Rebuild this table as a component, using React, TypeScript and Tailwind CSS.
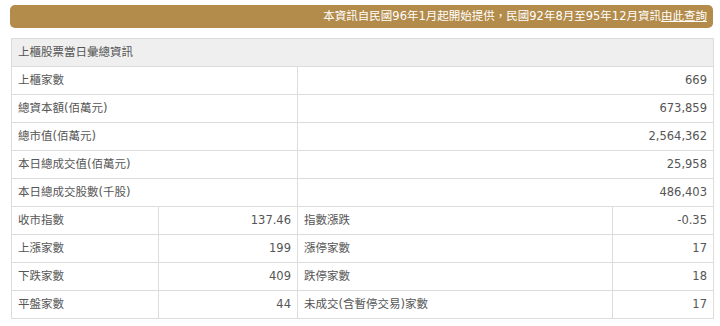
const font = { fontFamily: '"DejaVu Sans", "Noto Sans CJK TC", sans-serif' }

const summary = [
  { label: '上櫃家數', value: '669' },
  { label: '總資本額(佰萬元)', value: '673,859' },
  { label: '總市值(佰萬元)', value: '2,564,362' },
  { label: '本日總成交值(佰萬元)', value: '25,958' },
  { label: '本日總成交股數(千股)', value: '486,403' },
]

const pairs = [
  ['收市指數', '137.46', '指數漲跌', '-0.35'],
  ['上漲家數', '199', '漲停家數', '17'],
  ['下跌家數', '409', '跌停家數', '18'],
  ['平盤家數', '44', '未成交(含暫停交易)家數', '17'],
]

const cell = 'h-[28px] border border-[#dcdcdc] px-[6px] py-0 align-middle'

export default function App() {
  return (
    <div className="min-h-[326px] w-[720px] bg-white pt-[5px] text-[11.5px] text-[#555]" style={font}>
      {/* 資訊來源說明 */}
      <div className="ml-[10px] flex h-[23px] w-[703px] items-center justify-end rounded-[5px] bg-[#b38b4a] px-[6px] text-white">
        <span>
          本資訊自民國96年1月起開始提供，民國92年8月至95年12月資訊
          <span className="underline">由此查詢</span>
        </span>
      </div>

      <table className="ml-[11px] mt-[10px] w-[702px] table-fixed border-collapse">
        <colgroup>
          <col className="w-[147px]" />
          <col className="w-[139px]" />
          <col className="w-[315px]" />
          <col className="w-[101px]" />
        </colgroup>
        <tbody>
          <tr className="bg-[#efefef]">
            <td colSpan={4} className={cell}>上櫃股票當日彙總資訊</td>
          </tr>
          {summary.map((row) => (
            <tr key={row.label}>
              <td colSpan={2} className={cell}>{row.label}</td>
              <td colSpan={2} className={cell + ' text-right'}>{row.value}</td>
            </tr>
          ))}
          {pairs.map((row) => (
            <tr key={row[0]}>
              <td className={cell}>{row[0]}</td>
              <td className={cell + ' text-right'}>{row[1]}</td>
              <td className={cell}>{row[2]}</td>
              <td className={cell + ' text-right'}>{row[3]}</td>
            </tr>
          ))}
        </tbody>
      </table>
    </div>
  )
}
